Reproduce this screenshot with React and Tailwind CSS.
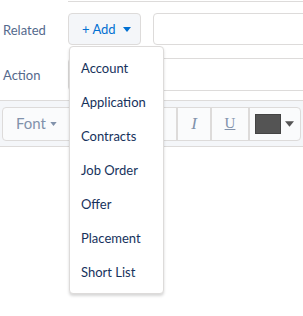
import React from "react";

const items = ["Account", "Application", "Contracts", "Job Order", "Offer", "Placement", "Short List"];

const Caret = ({ className }) => (
  <svg viewBox="0 0 8 5" className={className} fill="currentColor">
    <path d="M0 0h8L4 5z" />
  </svg>
);

const App = () => {
  return (
    <div
      className="relative w-[303px] h-[316px] overflow-hidden bg-white text-[13px]"
      style={{ fontFamily: "Lato, 'Open Sans', sans-serif" }}
    >
      {/* tail of the field above */}
      <div className="ml-[68px] h-[2px] border-b border-[#dddbda]" />

      {/* Related row */}
      <div className="flex items-center mt-[11px] h-[32px]">
        <div className="w-[68px] pl-[3px] pt-[3px] text-[#54698d]">Related</div>
        <button className="flex items-center gap-[7px] w-[73px] h-[32px] pl-[13px] pt-[1px] rounded-[4px] border border-[#dddbda] bg-[#f4f6f9] text-[#0070d2]">
          <span>+ Add</span>
          <Caret className="w-[8px] h-[5px]" />
        </button>
        <div className="ml-[12px] flex-1 h-[32px] -mr-[4px] rounded-[4px] border border-[#dddbda] bg-white" />
      </div>

      {/* Action row */}
      <div className="flex items-center mt-[13px] h-[33px]">
        <div className="w-[68px] pl-[3px] pt-[2px] text-[#54698d]">Action</div>
        <div className="flex-1 h-[33px] -mr-[4px] rounded-[4px] border border-[#dddbda] bg-white" />
      </div>

      {/* toolbar */}
      <div className="mt-[9px] h-[47px] border-y border-[#dddbda] bg-[#f4f6f9] flex items-center pl-[2px] pr-[2px]">
        <div className="flex h-[34px] w-full">
          <div className="flex items-center gap-[4px] w-[100px] pl-[13px] rounded-l-[4px] border border-[#dddbda] bg-[#fafbfc] text-[15px] text-[#8192ab]">
            <span>Font</span>
            <Caret className="w-[7px] h-[4px]" />
          </div>
          <div className="w-[41px]" />
          <div className="flex flex-1 rounded-[4px] border border-[#dddbda] bg-[#fafbfc]">
            <div className="w-[34px] border-r-2 border-[#dddbda]" />
            <div
              className="w-[34px] flex items-center justify-center border-r-2 border-[#dddbda] text-[17px] italic text-[#8192ab]"
              style={{ fontFamily: "'Liberation Serif', serif" }}
            >
              I
            </div>
            <div
              className="w-[38px] flex items-center justify-center border-r-2 border-[#dddbda] text-[15px] underline text-[#8192ab]"
              style={{ fontFamily: "'Liberation Serif', serif" }}
            >
              U
            </div>
            <div className="flex-1 flex items-center pl-[5px] gap-[4px]">
              <div className="w-[26px] h-[20px] bg-[#545454] border border-[#444]" />
              <Caret className="w-[9px] h-[10px] text-[#545454]" />
            </div>
          </div>
        </div>
      </div>

      {/* dropdown menu */}
      <div className="absolute left-[69px] top-[46px] w-[95px] rounded-[4px] border border-[#dddbda] bg-white py-[4px] shadow-[0_2px_3px_rgba(0,0,0,0.16)]">
        {items.map((item) => (
          <div key={item} className="h-[34px] flex items-center pl-[11px] pt-[2px] text-[#16325c]">
            {item}
          </div>
        ))}
      </div>
    </div>
  );
};

export default App;
